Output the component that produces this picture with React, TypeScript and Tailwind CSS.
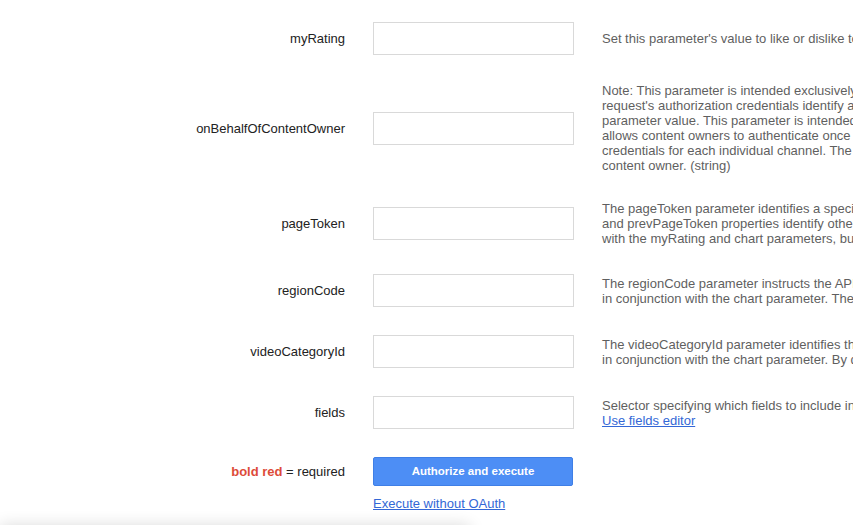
import type { ReactNode } from 'react';

type Param = {
  name: string;
  lines: ReactNode[];
};

const params: Param[] = [
  {
    name: 'myRating',
    lines: [
      "Set this parameter's value to like or dislike to instruct the API to only return videos liked or disliked by the authenticated user. (string)",
    ],
  },
  {
    name: 'onBehalfOfContentOwner',
    lines: [
      'Note: This parameter is intended exclusively for YouTube content partners. The onBehalfOfContentOwner parameter indicates that the',
      "request's authorization credentials identify a YouTube CMS user who is acting on behalf of the content owner specified in the",
      'parameter value. This parameter is intended for YouTube content partners that own and manage many different YouTube channels. It',
      'allows content owners to authenticate once and get access to all their video and channel data, without having to provide authentication',
      'credentials for each individual channel. The CMS account that the user authenticates with must be linked to the specified YouTube',
      'content owner. (string)',
    ],
  },
  {
    name: 'pageToken',
    lines: [
      'The pageToken parameter identifies a specific page in the result set that should be returned. In an API response, the nextPageToken',
      'and prevPageToken properties identify other pages that could be retrieved. Note: This parameter is supported for use in conjunction',
      'with the myRating and chart parameters, but it is not supported for use in conjunction with the id parameter. (string)',
    ],
  },
  {
    name: 'regionCode',
    lines: [
      'The regionCode parameter instructs the API to select a video chart available in the specified region. This parameter can only be used',
      'in conjunction with the chart parameter. The parameter value is an ISO 3166-1 alpha-2 country code. (string)',
    ],
  },
  {
    name: 'videoCategoryId',
    lines: [
      'The videoCategoryId parameter identifies the video category for which the chart should be retrieved. This parameter can only be used',
      'in conjunction with the chart parameter. By default, charts are not restricted to a particular category. (string)',
    ],
  },
  {
    name: 'fields',
    lines: [
      'Selector specifying which fields to include in a partial response.',
      <a key="link" href="#" className="text-[#3367d6] underline">
        Use fields editor
      </a>,
    ],
  },
];

export default function App() {
  return (
    <div className="relative w-full h-[525px] overflow-hidden bg-white font-['Liberation_Sans',Arial,sans-serif] text-[13px] leading-[15px]">
      <div className="flex flex-col pt-[8px]">
        {params.map((p) => (
          <div key={p.name} className="flex items-center py-[14px]">
            <label className="w-[345px] shrink-0 text-right text-[#222]">{p.name}</label>
            <input
              type="text"
              className="ml-[28px] w-[201px] h-[33px] shrink-0 border border-[#d9d9d9] bg-white outline-none"
            />
            <div className="ml-[28px] w-[700px] shrink-0 text-[#5f5f5f]">
              {p.lines.map((line, i) => (
                <div key={i} className="whitespace-nowrap">
                  {line}
                </div>
              ))}
            </div>
          </div>
        ))}

        <div className="flex items-start pt-[14px]">
          <div className="w-[345px] h-[29px] shrink-0 flex items-center justify-end text-[#222]">
            <span className="font-bold text-[#dd4b39]">bold red</span>
            <span>&nbsp;= required</span>
          </div>
          <div className="ml-[28px] flex flex-col items-start">
            <button className="w-[200px] h-[29px] rounded-[2px] border border-[#3f7fe6] bg-[#4d8ef5] text-[11.5px] font-bold text-white">
              Authorize and execute
            </button>
            <a href="#" className="mt-[10px] text-[#3367d6] underline">
              Execute without OAuth
            </a>
          </div>
        </div>
      </div>

      <div className="absolute left-0 top-[525px] w-[470px] h-[20px] shadow-[0_0_16px_rgba(0,0,0,0.14)]" />
    </div>
  );
}
